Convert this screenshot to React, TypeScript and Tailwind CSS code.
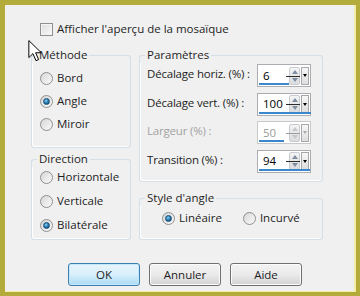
import React from "react";

const font = { fontFamily: '"Open Sans", "Noto Sans", sans-serif' };

function Radio({ checked, label }: { checked?: boolean; label: string }) {
  return (
    <div className="flex items-center h-[16px] gap-[4px]">
      <span className="w-[13px] h-[13px] rounded-full border border-[#8e8f8f] bg-gradient-to-br from-[#d6d6d6] to-[#fbfbfb] flex items-center justify-center shrink-0">
        {checked && (
          <span className="w-[7px] h-[7px] rounded-full bg-[radial-gradient(circle_at_40%_35%,#8fd3f5_0%,#2a80b9_45%,#0b3e66_100%)] border border-[#1a4e74]" />
        )}
      </span>
      <span className="text-[11.5px] leading-[16px] text-[#1e1e1e] whitespace-nowrap">{label}</span>
    </div>
  );
}

function Group({
  title,
  className,
  children,
}: {
  title: string;
  className: string;
  children: React.ReactNode;
}) {
  return (
    <div className={`flex flex-col ${className}`}>
      {/* Title over top border */}
      <div className="flex h-[16px] shrink-0">
        <span className="w-[6px] h-[8px] self-end border-l border-t border-[#d5dfe5] rounded-tl-[3px]" />
        <span className="px-[2px] text-[11.5px] leading-[16px] text-[#1e1e1e] whitespace-nowrap">
          {title}
        </span>
        <span className="flex-1 h-[8px] self-end border-r border-t border-[#d5dfe5] rounded-tr-[3px]" />
      </div>
      <div className="flex-1 border-l border-r border-b border-[#d5dfe5] rounded-b-[3px] shadow-[inset_1px_-1px_0_#fff]">
        {children}
      </div>
    </div>
  );
}

function Spinner({
  value,
  bar,
  disabled,
}: {
  value: string;
  bar: string;
  disabled?: boolean;
}) {
  return (
    <div
      className={`relative w-[54px] h-[23px] shrink-0 border bg-white flex items-center ${
        disabled ? "border-[#c9c9c9]" : "border-[#abadb3]"
      }`}
    >
      <span
        className={`flex-1 pl-[5px] text-[11.5px] leading-[16px] ${
          disabled ? "text-[#9a9a9a]" : "text-black"
        }`}
      >
        {value}
      </span>
      <div className="relative w-[11px] h-[18px] mr-[1px] flex flex-col border border-[#c8ccd2] rounded-[2px] bg-gradient-to-b from-[#f4f4f4] to-[#dcdcdc]">
        <div className="flex-1 flex items-center justify-center">
          <span
            className={`w-0 h-0 border-l-[3px] border-r-[3px] border-b-[4px] border-l-transparent border-r-transparent ${
              disabled ? "border-b-[#c4c8cc]" : "border-b-[#7d8ea3]"
            }`}
          />
        </div>
        <div className="flex-1 flex items-center justify-center">
          <span
            className={`w-0 h-0 border-l-[3px] border-r-[3px] border-t-[4px] border-l-transparent border-r-transparent ${
              disabled ? "border-t-[#c4c8cc]" : "border-t-[#7d8ea3]"
            }`}
          />
        </div>
        <span
          className={`absolute right-[-1px] top-[8px] w-[14px] h-[1px] ${
            disabled ? "bg-[#9a9a9a]" : "bg-[#2a2a2a]"
          }`}
        />
      </div>
      <div className="w-[8px] h-[18px] mr-[1px] border border-[#a8a8a8] bg-gradient-to-b from-[#f7f7f7] to-[#dedede] flex items-center justify-center">
        <span
          className={`w-0 h-0 border-l-[2.5px] border-r-[2.5px] border-t-[3px] border-l-transparent border-r-transparent ${
            disabled ? "border-t-[#a8a8a8]" : "border-t-black"
          }`}
        />
      </div>
      <span className={`absolute left-[1px] bottom-[1px] h-[2px] bg-[#3b87cc] ${bar}`} />
    </div>
  );
}

function Row({
  label,
  value,
  bar,
  disabled,
}: {
  label: string;
  value: string;
  bar: string;
  disabled?: boolean;
}) {
  return (
    <div className="flex items-center h-[23px]">
      <span
        className={`flex-1 text-[11.5px] leading-[16px] -mt-[3px] whitespace-nowrap tracking-[-0.2px] ${
          disabled ? "text-[#a3a3a3]" : "text-[#1e1e1e]"
        }`}
      >
        {label}
      </span>
      <Spinner value={value} bar={bar} disabled={disabled} />
    </div>
  );
}

function Button({ label, primary }: { label: string; primary?: boolean }) {
  return (
    <button
      type="button"
      className={`w-[72px] h-[23px] rounded-[3px] border text-[11.5px] leading-[16px] text-[#1e1e1e] ${
        primary
          ? "border-[#3c7fb1] bg-gradient-to-b from-[#e8f5fc] via-[#d9f0fc] to-[#a9daf4] shadow-[inset_0_0_0_1px_#c4e8fa]"
          : "border-[#707070] bg-gradient-to-b from-[#f2f2f2] via-[#ebebeb] to-[#d2d2d2] shadow-[inset_0_0_0_1px_#fcfcfc]"
      }`}
    >
      {label}
    </button>
  );
}

export default function App() {
  return (
    <div
      className="w-[360px] h-[296px] bg-[#b3ab3c] pl-[5px] pt-[5px] pr-[4px] pb-[4px]"
      style={font}
    >
      <div className="relative h-full bg-[#f0f0f0] border-r-2 border-b border-[#f3eea4] flex flex-col">
        {/* Checkbox */}
        <div className="flex items-center h-[16px] mt-[16px] ml-[35px] gap-[4px]">
          <span className="w-[13px] h-[13px] border border-[#8e8f8f] bg-gradient-to-br from-[#dcdcdc] to-[#fafafa] shadow-[inset_0_0_0_1px_#f4f4f4]" />
          <span className="text-[11.5px] leading-[16px] text-[#1e1e1e]">
            Afficher l'aperçu de la mosaïque
          </span>
        </div>

        <div className="flex mt-[10px] ml-[26px] gap-[8px]">
          {/* Left column */}
          <div className="flex flex-col w-[100px] gap-[3px]">
            <Group title="Méthode" className="h-[101px]">
              <div className="flex flex-col gap-[7px] mt-[7px] px-[8px]">
                <Radio label="Bord" />
                <Radio label="Angle" checked />
                <Radio label="Miroir" />
              </div>
            </Group>
            <Group title="Direction" className="h-[89px]">
              <div className="flex flex-col gap-[8px] mt-[2px] px-[8px]">
                <Radio label="Horizontale" />
                <Radio label="Verticale" />
                <Radio label="Bilatérale" checked />
              </div>
            </Group>
          </div>

          {/* Right column */}
          <div className="flex flex-col w-[184px] gap-[8px]">
            <Group title="Paramètres" className="h-[135px]">
              <div className="flex flex-col gap-[5.5px] mt-[1px] pl-[7px] pr-[11px]">
                <Row label="Décalage horiz. (%) :" value="6" bar="w-[30px]" />
                <Row label="Décalage vert. (%) :" value="100" bar="w-[52px]" />
                <Row label="Largeur (%) :" value="50" bar="w-[25px]" disabled />
                <Row label="Transition (%) :" value="94" bar="w-[51px]" />
              </div>
            </Group>
            <Group title="Style d'angle" className="h-[50px]">
              <div className="flex gap-[21px] mt-[4px] pl-[22px]">
                <Radio label="Linéaire" checked />
                <Radio label="Incurvé" />
              </div>
            </Group>
          </div>
        </div>

        {/* Buttons */}
        <div className="flex mt-[23px] ml-[63px] gap-[9px]">
          <Button label="OK" primary />
          <Button label="Annuler" />
          <Button label="Aide" />
        </div>

        {/* Mouse cursor */}
        <svg
          className="absolute left-[23px] top-[35px]"
          width="16"
          height="22"
          viewBox="0 0 14 20"
        >
          <path
            d="M0.5 0.5 L0.5 16 L4.2 12.4 L7 18.8 L9.4 17.8 L6.7 11.6 L11.8 11.6 Z"
            fill="#fff"
            stroke="#000"
            strokeWidth="0.9"
            strokeLinejoin="round"
          />
        </svg>
      </div>
    </div>
  );
}
